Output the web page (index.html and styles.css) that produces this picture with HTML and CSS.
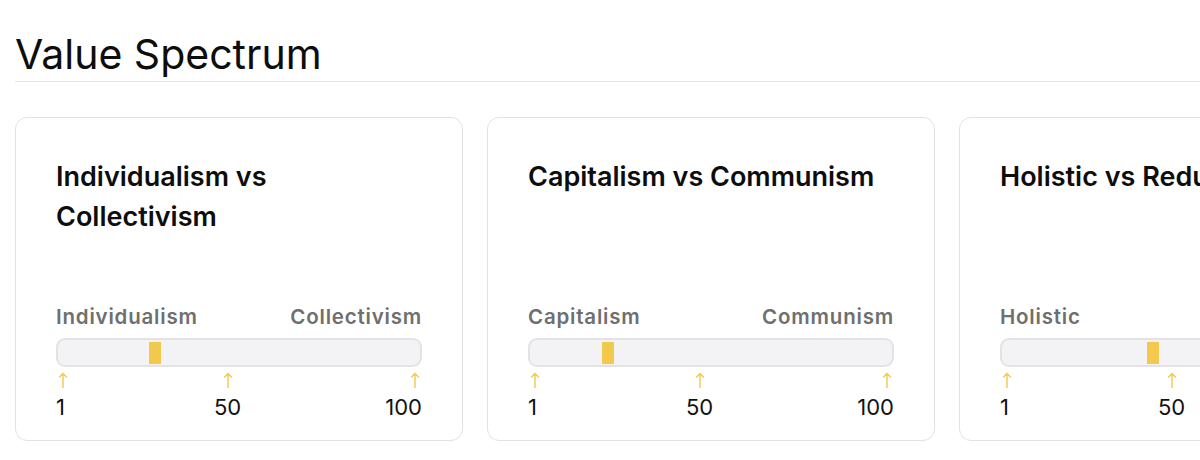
FILE: index.html
```html
<!DOCTYPE html>
<html lang="en">
<head>
<meta charset="utf-8">
<title>Value Spectrum</title>
<link rel="stylesheet" href="styles.css">
</head>
<body>
<div class="page">
  <h1 class="page-title">Value Spectrum</h1>
  <div class="cards">
    <div class="card">
      <h2 class="card-title">Individualism vs Collectivism</h2>
      <div class="spectrum">
        <div class="ends"><span>Individualism</span><span>Collectivism</span></div>
        <div class="track"><div class="marker" style="left: 25%"></div></div>
        <div class="scale">
          <div class="tick tick-start"><svg class="arrow" viewBox="0 0 14 16"><path d="M7 15.5V1.5M3.6 5L7 1.5L10.4 5"/></svg><span>1</span></div>
          <div class="tick tick-mid"><svg class="arrow" viewBox="0 0 14 16"><path d="M7 15.5V1.5M3.6 5L7 1.5L10.4 5"/></svg><span>50</span></div>
          <div class="tick tick-end"><svg class="arrow" viewBox="0 0 14 16"><path d="M7 15.5V1.5M3.6 5L7 1.5L10.4 5"/></svg><span>100</span></div>
        </div>
      </div>
    </div>
    <div class="card">
      <h2 class="card-title">Capitalism vs Communism</h2>
      <div class="spectrum">
        <div class="ends"><span>Capitalism</span><span>Communism</span></div>
        <div class="track"><div class="marker" style="left: 20%"></div></div>
        <div class="scale">
          <div class="tick tick-start"><svg class="arrow" viewBox="0 0 14 16"><path d="M7 15.5V1.5M3.6 5L7 1.5L10.4 5"/></svg><span>1</span></div>
          <div class="tick tick-mid"><svg class="arrow" viewBox="0 0 14 16"><path d="M7 15.5V1.5M3.6 5L7 1.5L10.4 5"/></svg><span>50</span></div>
          <div class="tick tick-end"><svg class="arrow" viewBox="0 0 14 16"><path d="M7 15.5V1.5M3.6 5L7 1.5L10.4 5"/></svg><span>100</span></div>
        </div>
      </div>
    </div>
    <div class="card">
      <h2 class="card-title">Holistic vs Reductionist</h2>
      <div class="spectrum">
        <div class="ends"><span>Holistic</span><span>Reductionist</span></div>
        <div class="track"><div class="marker" style="left: 40%"></div></div>
        <div class="scale">
          <div class="tick tick-start"><svg class="arrow" viewBox="0 0 14 16"><path d="M7 15.5V1.5M3.6 5L7 1.5L10.4 5"/></svg><span>1</span></div>
          <div class="tick tick-mid"><svg class="arrow" viewBox="0 0 14 16"><path d="M7 15.5V1.5M3.6 5L7 1.5L10.4 5"/></svg><span>50</span></div>
          <div class="tick tick-end"><svg class="arrow" viewBox="0 0 14 16"><path d="M7 15.5V1.5M3.6 5L7 1.5L10.4 5"/></svg><span>100</span></div>
        </div>
      </div>
    </div>
  </div>
</div>
</body>
</html>
```
FILE: styles.css
```css
* { box-sizing: border-box; }

html, body {
  margin: 0;
  padding: 0;
  background: #ffffff;
}

body {
  font-family: Inter, "Noto Sans", "Liberation Sans", sans-serif;
  color: #111111;
  overflow: hidden;
}

.page {
  padding: 30px 0 0 15px;
  width: 1200px;
  overflow: hidden;
}

.page-title {
  margin: 0;
  font-size: 41px;
  font-weight: 400;
  line-height: 48px;
  letter-spacing: 0;
  padding-bottom: 3px;
  border-bottom: 1px solid #e4e4e4;
  color: #0d0d0d;
}

.cards {
  display: flex;
  gap: 24px;
  margin-top: 35px;
}

.card {
  flex: 0 0 448px;
  height: 324px;
  border: 1px solid #e2e2e2;
  border-radius: 12px;
  padding: 39px 40px 20px;
  display: flex;
  flex-direction: column;
  background: #fff;
}

.card-title {
  margin: 0;
  font-size: 27px;
  font-weight: 600;
  line-height: 40px;
  letter-spacing: 0;
  color: #0d0d0d;
  white-space: normal;
}

.spectrum {
  margin-top: auto;
}

.ends {
  display: flex;
  justify-content: space-between;
  font-size: 20.5px;
  font-weight: 600;
  line-height: 24px;
  letter-spacing: 0.8px;
  color: #6f6f6f;
  white-space: nowrap;
}

.track {
  position: relative;
  margin-top: 9px;
  height: 29px;
  border: 2px solid #e3e3e5;
  border-radius: 9px;
  background: #f3f3f5;
}

.marker {
  position: absolute;
  top: 2px;
  width: 12px;
  height: 22px;
  background: #f2c94c;
}

.scale {
  display: flex;
  justify-content: space-between;
  margin-top: 5px;
}

.tick {
  display: flex;
  flex-direction: column;
  font-size: 22px;
  line-height: 26px;
  color: #111;
}

.tick-start { align-items: flex-start; }
.tick-mid { align-items: center; }
.tick-end { align-items: flex-end; }

.arrow {
  width: 14px;
  height: 16px;
  margin-bottom: 6px;
  fill: none;
  stroke: #f2c94c;
  stroke-width: 1.4;
  stroke-linecap: round;
  stroke-linejoin: round;
}
```
